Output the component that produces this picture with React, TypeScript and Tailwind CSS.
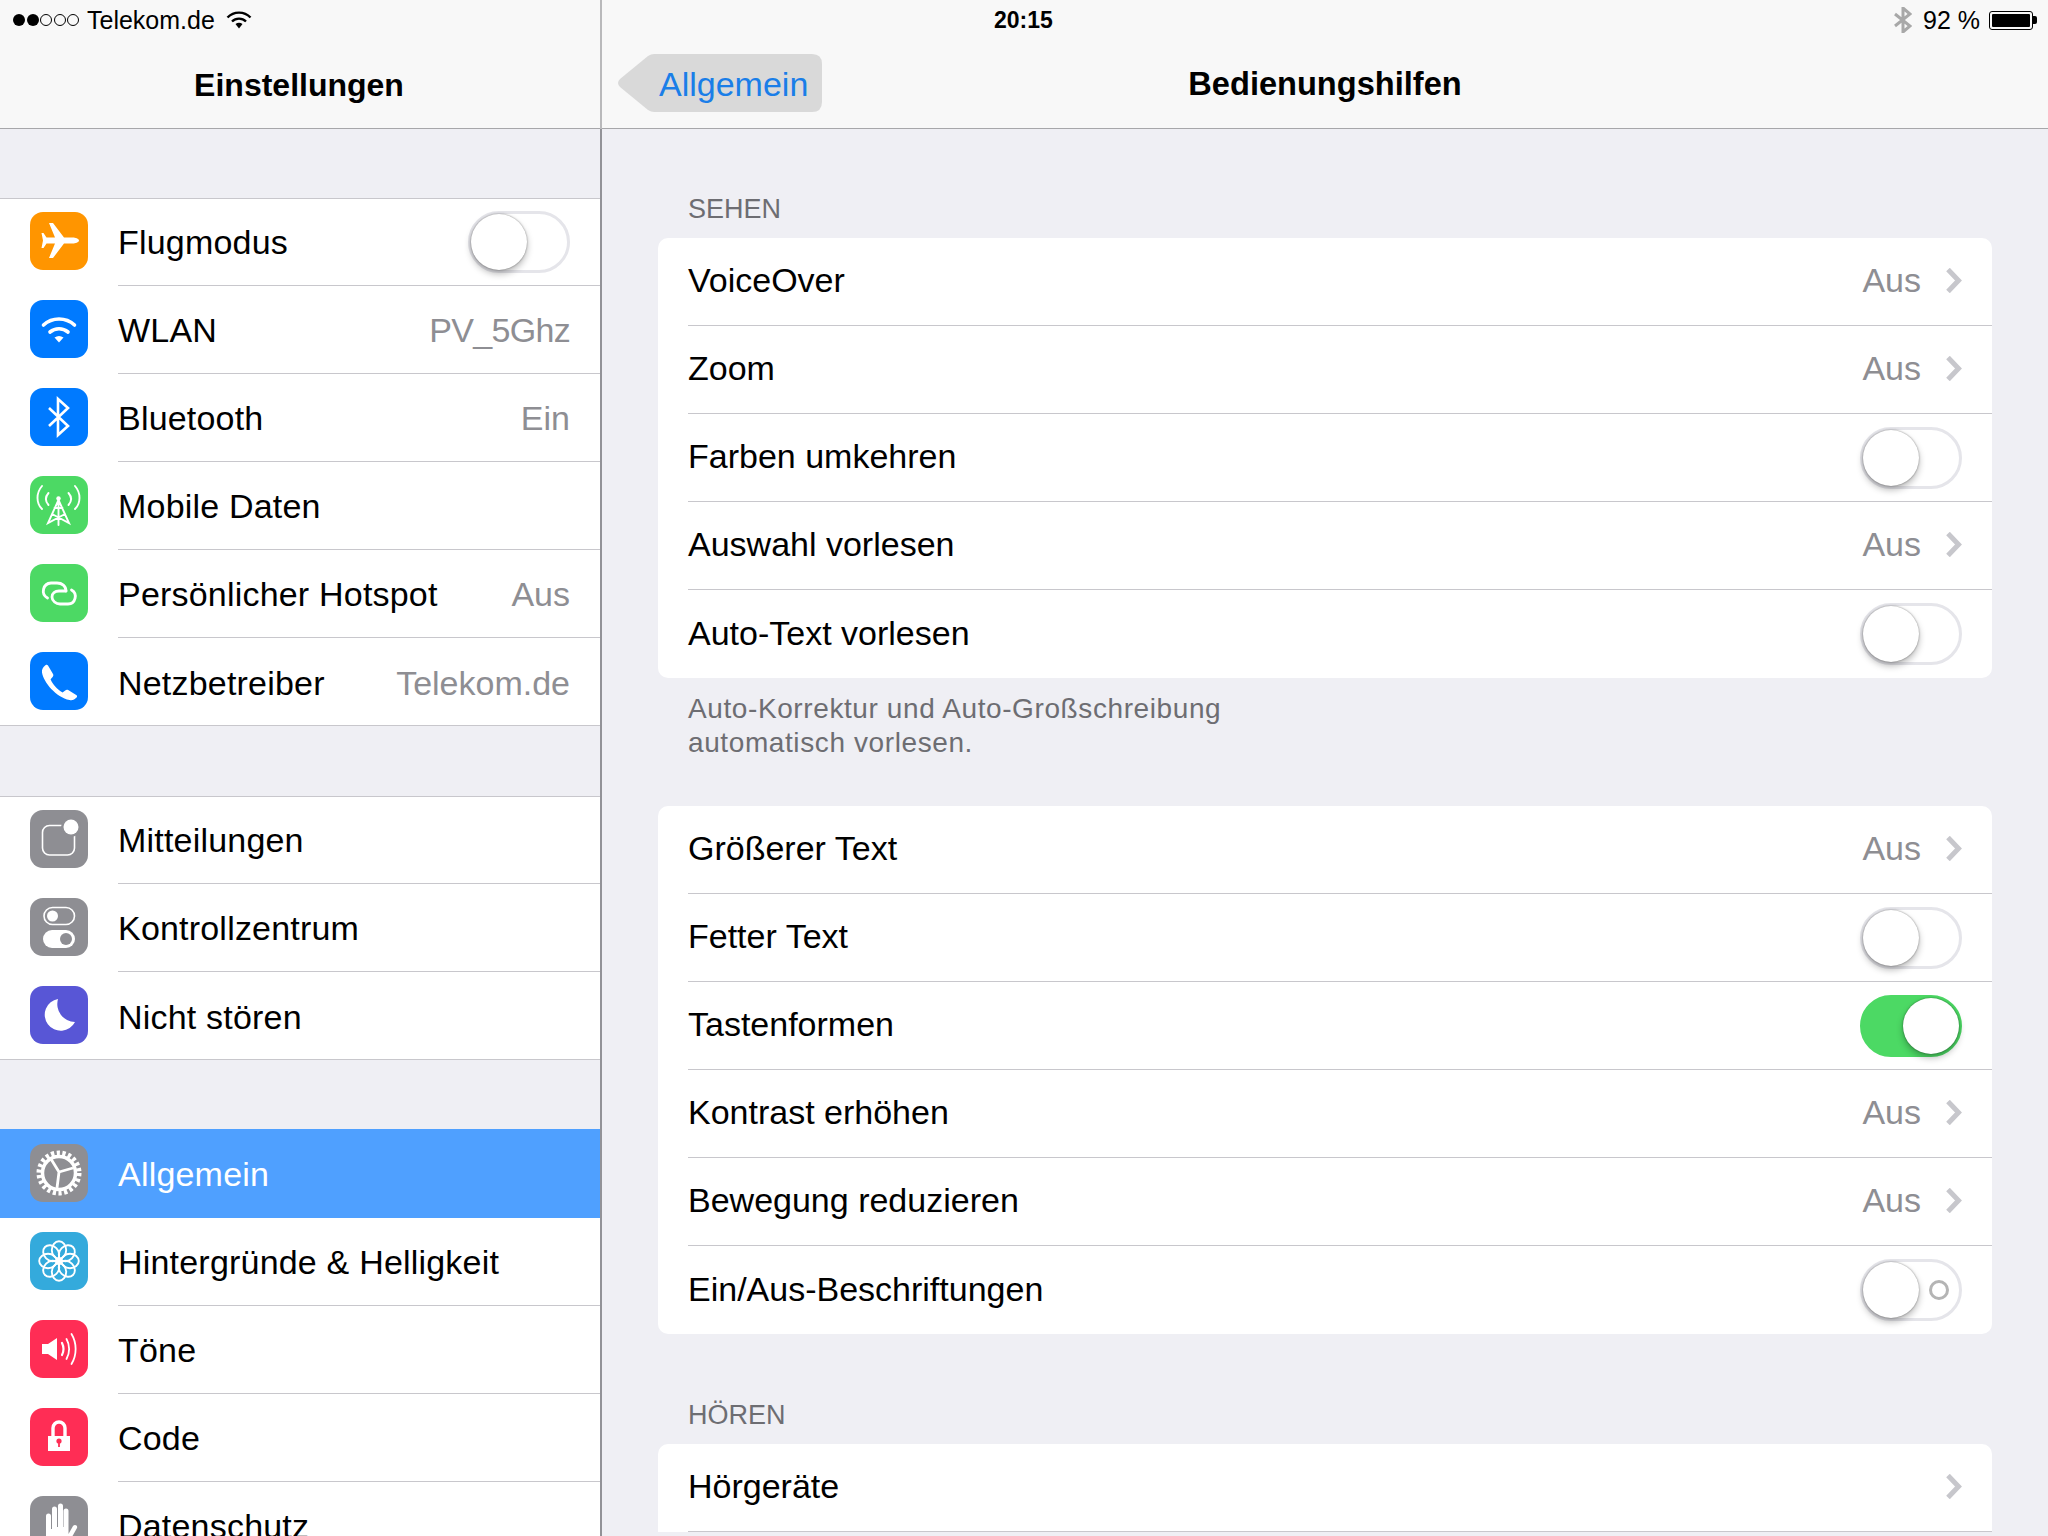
import type { ReactNode } from "react";

const FONT = "font-['Liberation_Sans',Arial,sans-serif]";

function WifiIcon() {
  return (
    <svg viewBox="0 0 58 58" className="h-full w-full" fill="none" stroke="white" strokeLinecap="round">
      <path d="M13.5 25 A23 23 0 0 1 44.5 25" strokeWidth={3.6} />
      <path d="M20 32 A14 14 0 0 1 38 32" strokeWidth={3.6} />
      <path d="M24.5 37.5 L29 42.5 L33.5 37.5 A8 8 0 0 0 24.5 37.5Z" fill="white" stroke="none" />
    </svg>
  );
}

function BluetoothIcon() {
  return (
    <svg viewBox="0 0 58 58" className="h-full w-full" fill="none" stroke="white" strokeWidth={2.6}>
      <path d="M19 20 L38 38 L28 47 L28 11 L38 20 L19 38" />
    </svg>
  );
}

function PlaneIcon() {
  return (
    <svg viewBox="0 0 58 58" className="h-full w-full" fill="white">
      <path d="M49 28.5 C49 26.5 45 25.5 43 25.5 L34 25.5 L23 11 L19 11 L25 25.5 L16.5 25.5 L13.5 21 L11.5 21 L13 28.5 L11.5 36 L13.5 36 L16.5 31.5 L25 31.5 L19 46 L23 46 L34 31.5 L43 31.5 C45 31.5 49 30.5 49 28.5Z" />
    </svg>
  );
}

function AntennaIcon() {
  return (
    <svg viewBox="0 0 58 58" className="h-full w-full" fill="none" stroke="white" strokeWidth={1.9} strokeLinecap="round">
      <path d="M12 10 C6 17 6 27 12 33" />
      <path d="M45 10 C51 17 51 27 45 33" />
      <path d="M18.5 17 C15 21 15 25 18.5 29" />
      <path d="M38.5 17 C42 21 42 25 38.5 29" />
      <circle cx={28.5} cy={22.5} r={2.2} fill="white" stroke="none" />
      <path d="M28.5 23 V49 M28.5 24 L18 47 L35 38 M28.5 24 L39 47 L22 38 M24.5 32 L32.5 32" />
    </svg>
  );
}

function HotspotIcon() {
  return (
    <svg viewBox="0 0 58 58" className="h-full w-full" fill="none" stroke="white" strokeWidth={2.8} strokeLinecap="round">
      <path d="M36 27 C36 22 32 19 27 19 H21 A8 8 0 0 0 17.5 34" />
      <path d="M36 27 H29 C25 27 22 29 22 33 C22 37 26 40 30 40 H38 A7.5 7.5 0 0 0 41.5 26" />
    </svg>
  );
}

function PhoneIcon() {
  return (
    <svg viewBox="0 0 58 58" className="h-full w-full" fill="white">
      <path d="M18 13.5 L23 22 C23.6 23 23.4 24.2 22.6 25 L20.6 27.2 C22.6 32.4 27 37.2 32.6 40.4 L35.2 38.4 C36.2 37.6 37.2 37.5 38.2 38.1 L46.2 43.1 C47.3 43.8 47.4 44.7 46.6 45.6 C44.6 47.6 42.4 48.6 39.6 48 C26 45 13.6 30.4 12 20.4 C11.6 17.4 13 15.2 15.4 13.2 C16.4 12.5 17.4 12.6 18 13.5Z" />
    </svg>
  );
}

function NotifyIcon() {
  return (
    <svg viewBox="0 0 58 58" className="h-full w-full" fill="none" stroke="white" strokeWidth={1.6}>
      <rect x={12.5} y={15.5} width={32} height={29.5} rx={7} />
      <circle cx={41} cy={17} r={10} fill="#8e8e93" stroke="none" />
      <circle cx={41} cy={17} r={7.5} fill="white" stroke="none" />
    </svg>
  );
}

function ControlIcon() {
  return (
    <svg viewBox="0 0 58 58" className="h-full w-full">
      <rect x={14} y={9.5} width={30.5} height={17} rx={8.5} fill="none" stroke="white" strokeWidth={1.6} />
      <circle cx={22.5} cy={18} r={5.5} fill="white" />
      <rect x={13} y={32} width={32} height={18} rx={9} fill="white" />
      <circle cx={36} cy={41} r={6} fill="#8e8e93" />
    </svg>
  );
}

function MoonIcon() {
  return (
    <svg viewBox="0 0 58 58" className="h-full w-full" fill="white">
      <path d="M28 13 A16 16 0 1 0 45 36 A18 18 0 0 1 28 13Z" />
    </svg>
  );
}

function GearIcon() {
  return (
    <svg viewBox="0 0 58 58" className="h-full w-full" fill="none" stroke="white">
      <circle cx={29} cy={29} r={20} strokeWidth={5} strokeDasharray="3.2 2.51" />
      <circle cx={29} cy={29} r={16.5} strokeWidth={3.5} />
      <path d="M29 28 L21 15 M29 28 L43 24 M29 28 L27 44" strokeWidth={2.8} />
    </svg>
  );
}

function FlowerIcon() {
  return (
    <svg viewBox="0 0 58 58" className="h-full w-full" fill="none" stroke="white" strokeWidth={1.9}>
      {[0, 45, 90, 135, 180, 225, 270, 315].map((a) => (
        <ellipse key={a} cx={29} cy={18} rx={7.2} ry={8.8} transform={`rotate(${a} 29 29)`} />
      ))}
      <circle cx={29} cy={29} r={3.6} fill="white" stroke="none" />
    </svg>
  );
}

function SoundIcon() {
  return (
    <svg viewBox="0 0 58 58" className="h-full w-full" fill="none" stroke="white" strokeWidth={1.8} strokeLinecap="round">
      <path d="M12 24 H18 L27 18 V40 L18 34 H12Z" fill="white" stroke="none" />
      <path d="M32 23 C34 27 34 31 32 35" strokeWidth={2.2} />
      <path d="M36.5 19 C40 25 40 33 36.5 39" />
      <path d="M41.5 14 C47 23 47 35 41.5 44" />
    </svg>
  );
}

function LockIcon() {
  return (
    <svg viewBox="0 0 58 58" className="h-full w-full" fill="none">
      <path d="M23 29 V20 A6 6 0 0 1 35 20 V29" stroke="white" strokeWidth={3.4} />
      <path d="M18 28 H40 V43 H18Z" fill="white" />
      <circle cx={29} cy={33} r={2.6} fill="#ff2d55" />
      <path d="M29 33 V39" stroke="#ff2d55" strokeWidth={1.8} />
    </svg>
  );
}

function HandIcon() {
  return (
    <svg viewBox="0 0 58 58" className="h-full w-full" fill="white">
      <path d="M16 20 A2.5 2.5 0 0 1 21 20 V33 H22 V13 A2.5 2.5 0 0 1 27 13 V31 H28 V10 A2.5 2.5 0 0 1 33 10 V31 H33.5 V15 A2.5 2.5 0 0 1 38.5 15 V38 L43 30 C44.5 28 48 29 47 32 L38 48 C36 52 33 54 27 54 C20 54 16 50 16 44Z" />
    </svg>
  );
}

function Toggle({ on = false, mark = false }: { on?: boolean; mark?: boolean }) {
  return (
    <div
      className={`relative h-[62px] w-[102px] shrink-0 rounded-full border-[3px] ${
        on ? "border-[#4cd964] bg-[#4cd964]" : "border-[#e5e5ea] bg-white"
      }`}
    >
      {mark && <div className="absolute right-[10px] top-[18px] h-[20px] w-[20px] rounded-full border-[3px] border-[#b4b4b4]" />}
      <div
        className={`absolute top-0 h-[56px] w-[56px] rounded-full bg-white shadow-[0_4px_7px_rgba(0,0,0,0.28),0_0_2px_rgba(0,0,0,0.45)] ${
          on ? "right-0" : "left-0"
        }`}
      />
    </div>
  );
}

function Chevron() {
  return (
    <svg viewBox="0 0 16 25" className="h-[25px] w-[16px] shrink-0" fill="none" stroke="#c7c7cc" strokeWidth={5}>
      <path d="M2 1.5 L12.5 12.5 L2 23.5" />
    </svg>
  );
}

type SideItem = {
  label: string;
  bg: string;
  icon: ReactNode;
  value?: string;
  valueClass?: string;
  toggle?: boolean;
  selected?: boolean;
};

function SideRow({ item, last }: { item: SideItem; last: boolean }) {
  return (
    <div className={`flex items-center pl-[30px] ${item.selected ? "h-[89px] bg-[#4fa0ff]" : "h-[88px]"}`}>
      <div className={`-mt-[2px] h-[58px] w-[58px] shrink-0 overflow-hidden rounded-[13px] ${item.bg}`}>{item.icon}</div>
      <div
        className={`ml-[30px] flex h-full min-w-0 flex-1 items-center justify-between pr-[30px] ${
          last || item.selected ? "" : "border-b border-[#c8c7cc]"
        }`}
      >
        <span className={`pt-[2px] text-[34px] tracking-[0.2px] ${item.selected ? "text-white" : "text-black"}`}>{item.label}</span>
        {item.value && <span className={`pt-[2px] text-[34px] text-[#8e8e93] ${item.valueClass ?? ""}`}>{item.value}</span>}
        {item.toggle && <Toggle />}
      </div>
    </div>
  );
}

function SideSection({ items, selectedFirst }: { items: SideItem[]; selectedFirst?: boolean }) {
  return (
    <div className={`bg-white ${selectedFirst ? "" : "shadow-[inset_0_1px_0_#c8c7cc,inset_0_-1px_0_#c8c7cc]"}`}>
      {items.map((item, i) => (
        <SideRow key={item.label} item={item} last={!selectedFirst && i === items.length - 1} />
      ))}
    </div>
  );
}

type SetRow = { label: string; value?: string; chevron?: boolean; toggle?: "off" | "on" | "mark" };

function Group({ rows, open }: { rows: SetRow[]; open?: boolean }) {
  return (
    <div className={`ml-[56px] mr-[56px] bg-white ${open ? "rounded-t-[10px]" : "rounded-[10px]"}`}>
      {rows.map((row, i) => (
        <div key={row.label} className="flex h-[88px] pl-[30px]">
          <div
            className={`flex flex-1 items-center justify-between pr-[30px] ${
              i === rows.length - 1 && !open ? "" : "border-b border-[#c8c7cc]"
            }`}
          >
            <span className="-mt-[2px] text-[34px] text-black">{row.label}</span>
            {row.chevron && (
              <div className="-mt-[2px] flex items-center gap-[25px]">
                {row.value && <span className="text-[34px] text-[#8e8e93]">{row.value}</span>}
                <Chevron />
              </div>
            )}
            {row.toggle && <Toggle on={row.toggle === "on"} mark={row.toggle === "mark"} />}
          </div>
        </div>
      ))}
    </div>
  );
}

const section1: SideItem[] = [
  { label: "Flugmodus", bg: "bg-[#ff9500]", icon: <PlaneIcon />, toggle: true },
  { label: "WLAN", bg: "bg-[#007aff]", icon: <WifiIcon />, value: "PV_5Ghz", valueClass: "tracking-[-0.7px]" },
  { label: "Bluetooth", bg: "bg-[#007aff]", icon: <BluetoothIcon />, value: "Ein" },
  { label: "Mobile Daten", bg: "bg-[#4cd964]", icon: <AntennaIcon /> },
  { label: "Persönlicher Hotspot", bg: "bg-[#4cd964]", icon: <HotspotIcon />, value: "Aus" },
  { label: "Netzbetreiber", bg: "bg-[#007aff]", icon: <PhoneIcon />, value: "Telekom.de" },
];

const section2: SideItem[] = [
  { label: "Mitteilungen", bg: "bg-[#8e8e93]", icon: <NotifyIcon /> },
  { label: "Kontrollzentrum", bg: "bg-[#8e8e93]", icon: <ControlIcon /> },
  { label: "Nicht stören", bg: "bg-[#5856d6]", icon: <MoonIcon /> },
];

const section3: SideItem[] = [
  { label: "Allgemein", bg: "bg-[#8e8e93]", icon: <GearIcon />, selected: true },
  { label: "Hintergründe & Helligkeit", bg: "bg-[#34aadc]", icon: <FlowerIcon /> },
  { label: "Töne", bg: "bg-[#ff2d55]", icon: <SoundIcon /> },
  { label: "Code", bg: "bg-[#ff2d55]", icon: <LockIcon /> },
  { label: "Datenschutz", bg: "bg-[#8e8e93]", icon: <HandIcon /> },
];

const group1: SetRow[] = [
  { label: "VoiceOver", value: "Aus", chevron: true },
  { label: "Zoom", value: "Aus", chevron: true },
  { label: "Farben umkehren", toggle: "off" },
  { label: "Auswahl vorlesen", value: "Aus", chevron: true },
  { label: "Auto-Text vorlesen", toggle: "off" },
];

const group2: SetRow[] = [
  { label: "Größerer Text", value: "Aus", chevron: true },
  { label: "Fetter Text", toggle: "off" },
  { label: "Tastenformen", toggle: "on" },
  { label: "Kontrast erhöhen", value: "Aus", chevron: true },
  { label: "Bewegung reduzieren", value: "Aus", chevron: true },
  { label: "Ein/Aus-Beschriftungen", toggle: "mark" },
];

const group3: SetRow[] = [{ label: "Hörgeräte", chevron: true }];

export default function App() {
  return (
    <div className={`flex h-[1536px] w-[2048px] overflow-hidden bg-[#efeff4] ${FONT}`}>
      {/* left pane */}
      <div className="w-[600px] shrink-0">
        <div className="h-[129px] border-b border-[#a7a7aa] bg-[#f8f8f8]">
          <div className="flex h-[40px] items-center pl-[13px] text-[25px] text-black">
            <div className="flex gap-[1.5px]">
              <span className="h-[12px] w-[12px] rounded-full bg-black" />
              <span className="h-[12px] w-[12px] rounded-full bg-black" />
              <span className="h-[12px] w-[12px] rounded-full border border-black" />
              <span className="h-[12px] w-[12px] rounded-full border border-black" />
              <span className="h-[12px] w-[12px] rounded-full border border-black" />
            </div>
            <span className="ml-[8px] pt-[2px]">Telekom.de</span>
            <svg viewBox="0 0 26 18" className="ml-[11px] h-[18px] w-[26px]" fill="none" stroke="black" strokeWidth={2.4}>
              <path d="M1.5 6.5 A16 16 0 0 1 24.5 6.5" />
              <path d="M6 10.5 A10 10 0 0 1 20 10.5" />
              <path d="M9.5 13 L13 17.5 L16.5 13 A6 6 0 0 0 9.5 13Z" fill="black" stroke="none" />
            </svg>
          </div>
          <div className="flex h-[88px] items-center justify-center pr-[2px] pt-[1px] text-[32px] font-bold text-black">Einstellungen</div>
        </div>
        <div className="h-[69px]" />
        <SideSection items={section1} />
        <div className="h-[70px]" />
        <SideSection items={section2} />
        <div className="h-[69px]" />
        <SideSection items={section3} selectedFirst />
      </div>

      {/* divider */}
      <div className="flex w-[2px] shrink-0 flex-col">
        <div className="h-[129px] bg-[#b9b9bb]" />
        <div className="flex-1 bg-[#929297]" />
      </div>

      {/* right pane */}
      <div className="min-w-0 flex-1">
        <div className="h-[129px] border-b border-[#a7a7aa] bg-[#f8f8f8]">
          <div className="flex h-[40px] items-center pr-[11px] text-[24px] text-black">
            <span className="ml-[392px] pt-[1px] text-[23px] font-bold">20:15</span>
            <div className="ml-auto flex items-center">
              <svg viewBox="0 0 18 26" className="h-[26px] w-[18px]" fill="none" stroke="#a8a8a8" strokeWidth={3}>
                <path d="M1 7 L16 19 L9 25 V1 L16 7 L1 19" />
              </svg>
              <span className="ml-[11px] mr-[1px] pt-[1px] text-[25px]">92 %</span>
              <div className="ml-[8px] flex items-center">
                <div className="h-[19px] w-[44px] rounded-[3px] border border-black p-[2px]">
                  <div className="h-full w-full rounded-[1px] bg-black" />
                </div>
                <div className="h-[8px] w-[4px] rounded-r-[2px] bg-black" />
              </div>
            </div>
          </div>
          <div className="grid h-[88px] grid-cols-[1fr_auto_1fr] items-center">
            <div className="relative -mt-[2px] ml-[16px] flex h-[58px] w-[204px] items-center pl-[41px] text-[34px] text-[#1a7ee8]">
              <svg viewBox="0 0 204 58" className="absolute inset-0 h-[58px] w-[204px]" fill="#d9d9d9">
                <path d="M2 25 L30 2 Q33 0 36 0 H194 Q204 0 204 10 V48 Q204 58 194 58 H36 Q33 58 30 56 L2 33 Q-2 29 2 25Z" />
              </svg>
              <span className="relative pt-[2px]">Allgemein</span>
            </div>
            <div className="pt-[1px] text-[32.6px] font-bold text-black">Bedienungshilfen</div>
            <div />
          </div>
        </div>

        <div className="ml-[86px] flex h-[109px] items-end pb-[12px] text-[27px] leading-[33px] text-[#6d6d72]">SEHEN</div>
        <Group rows={group1} />
        <div className="ml-[86px] h-[128px] pt-[14px] text-[28px] leading-[33.5px] tracking-[0.6px] text-[#6d6d72]">
          Auto-Korrektur und Auto-Großschreibung
          <br />
          automatisch vorlesen.
        </div>
        <Group rows={group2} />
        <div className="ml-[86px] flex h-[110px] items-end pb-[12px] text-[27px] leading-[33px] text-[#6d6d72]">HÖREN</div>
        <Group rows={group3} open />
      </div>
    </div>
  );
}
